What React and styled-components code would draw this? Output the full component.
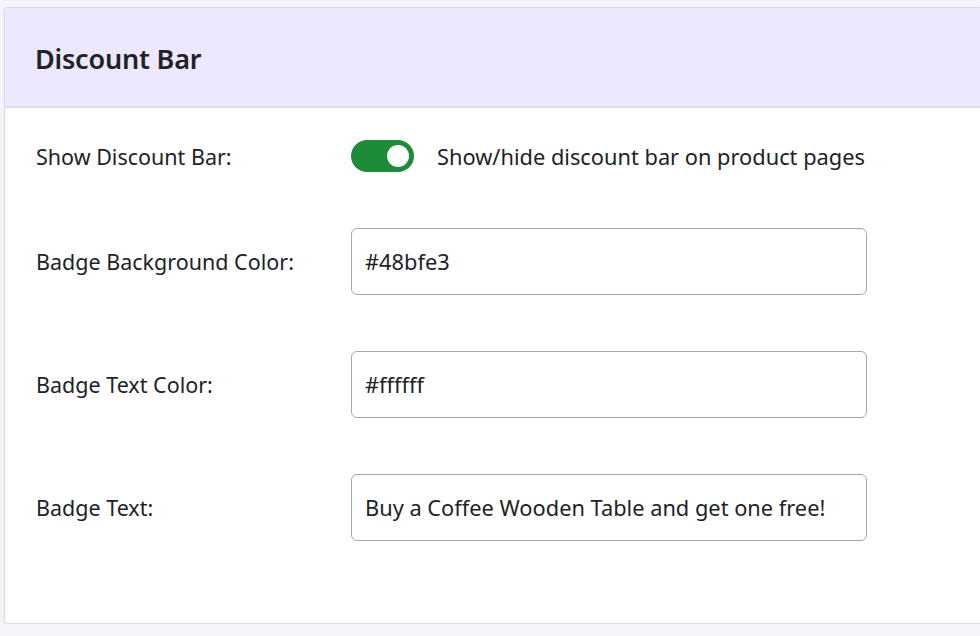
import { useState } from "react";
import styled, { createGlobalStyle } from "styled-components";

const GlobalStyle = createGlobalStyle`
  html, body {
    margin: 0;
    padding: 0;
    background: #f5f4fa;
    overflow: hidden;
  }
  body {
    font-family: "Noto Sans", "Open Sans", "Liberation Sans", sans-serif;
    color: #1d2327;
  }
`;

const Page = styled.div`
  padding: 7px 0 0 4px;
`;

const Card = styled.section`
  background: #fff;
  border: 1px solid #dcdce4;
  border-right: none;
  border-radius: 3px 0 0 3px;
  box-shadow: 0 1px 2px rgba(0, 0, 0, 0.08);
`;

const Header = styled.header`
  background: #eee8fe;
  border-bottom: 2px solid #dedae9;
  height: 100px;
  display: flex;
  align-items: center;
  padding: 3px 30px 0;
  box-sizing: border-box;
`;

const Title = styled.h2`
  margin: 0;
  font-size: 27px;
  font-weight: 600;
  letter-spacing: -0.2px;
  color: #1d2327;
`;

const Body = styled.div`
  padding: 4px 31px 54px;
`;

const Row = styled.div`
  display: grid;
  grid-template-columns: 315px 516px;
  align-items: center;
  padding: 28px 0;
`;

const Label = styled.label`
  font-size: 21.5px;
  color: #1d2327;
`;

const Control = styled.div`
  display: flex;
  align-items: center;
  gap: 23px;
  white-space: nowrap;
`;

const Switch = styled.button`
  flex: none;
  width: 63px;
  height: 32px;
  border: none;
  border-radius: 16px;
  background: ${(p) => (p.$on ? "#1e8b38" : "#b5b5b5")};
  display: flex;
  align-items: center;
  justify-content: ${(p) => (p.$on ? "flex-end" : "flex-start")};
  padding: 0 5px;
  cursor: pointer;
`;

const Knob = styled.span`
  width: 22px;
  height: 22px;
  border-radius: 50%;
  background: #fff;
`;

const Hint = styled.span`
  font-size: 21.8px;
  color: #1d2327;
`;

const TextInput = styled.input`
  box-sizing: border-box;
  width: 516px;
  height: 67px;
  border: 1.5px solid #a7a7a7;
  border-radius: 6px;
  padding: 0 13px;
  font-family: inherit;
  font-size: 21.8px;
  color: #1d2327;
  background: #fff;
  outline: none;
`;

const fields = [
  { id: "bg", label: "Badge Background Color:", value: "#48bfe3" },
  { id: "fg", label: "Badge Text Color:", value: "#ffffff" },
  { id: "text", label: "Badge Text:", value: "Buy a Coffee Wooden Table and get one free!" },
];

export default function App() {
  const [on, setOn] = useState(true);
  const [values, setValues] = useState(
    Object.fromEntries(fields.map((f) => [f.id, f.value]))
  );

  return (
    <>
      <GlobalStyle />
      <Page>
        <Card>
          <Header>
            <Title>Discount Bar</Title>
          </Header>
          <Body>
            <Row>
              <Label>Show Discount Bar:</Label>
              <Control>
                <Switch $on={on} onClick={() => setOn(!on)} aria-pressed={on}>
                  <Knob />
                </Switch>
                <Hint>Show/hide discount bar on product pages</Hint>
              </Control>
            </Row>
            {fields.map((f) => (
              <Row key={f.id}>
                <Label htmlFor={f.id}>{f.label}</Label>
                <TextInput
                  id={f.id}
                  value={values[f.id]}
                  onChange={(e) => setValues({ ...values, [f.id]: e.target.value })}
                />
              </Row>
            ))}
          </Body>
        </Card>
      </Page>
    </>
  );
}
